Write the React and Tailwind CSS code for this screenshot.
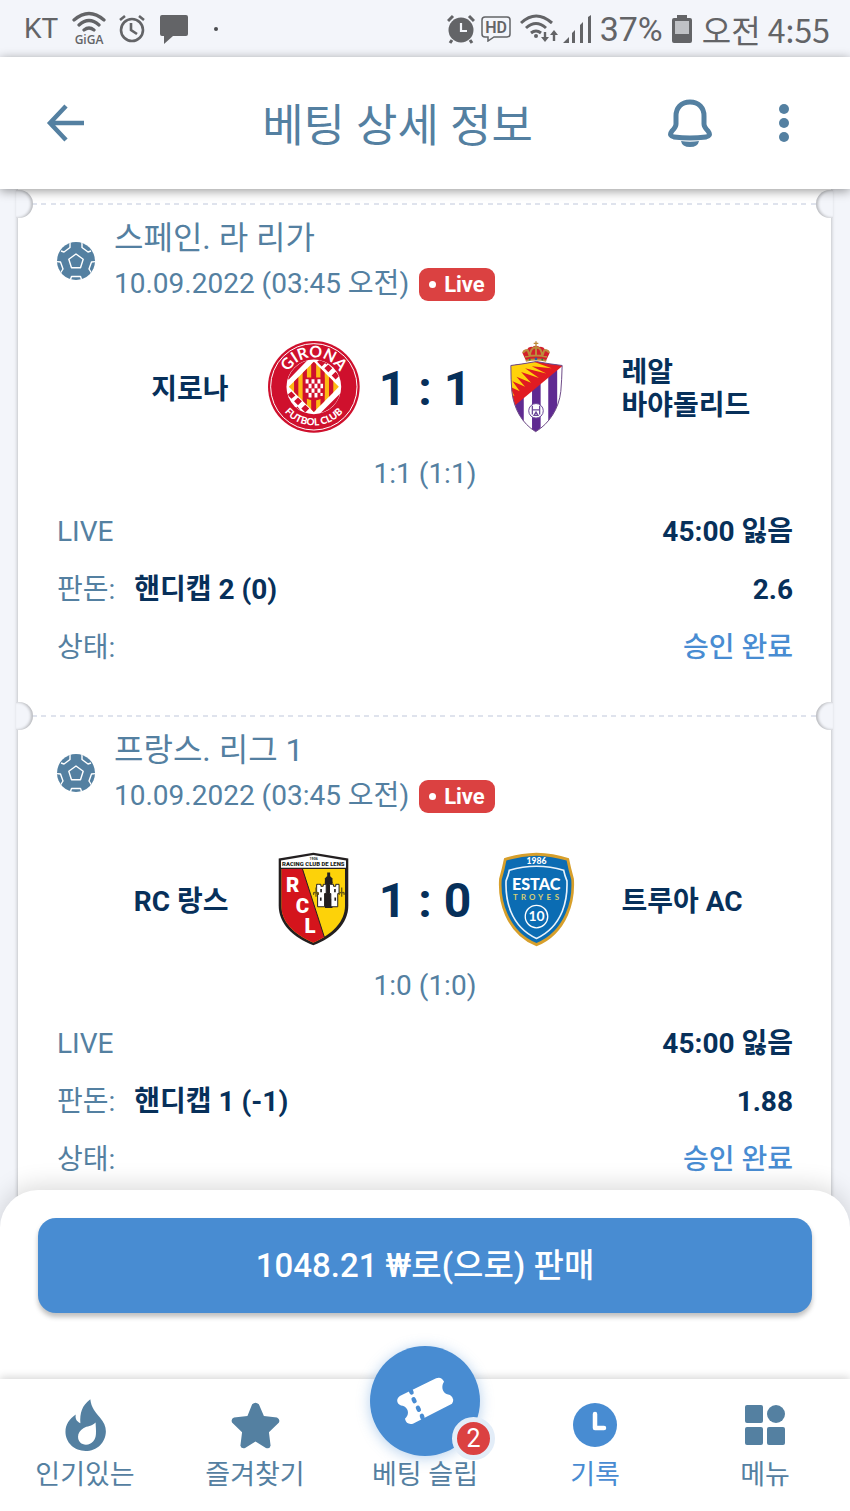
const bets = [
  {
    id: 1,
    league: '스페인. 라 리가',
    date: '10.09.2022 (03:45 오전)',
    home: '지로나',
    away: '레알 바야돌리드',
    HomeCrest: GironaCrest,
    AwayCrest: ValladolidCrest,
    score: '1 : 1',
    halves: '1:1 (1:1)',
    result: '45:00 잃음',
    pick: '핸디캡 2 (0)',
    odds: '2.6',
    status: '승인 완료',
  },
  {
    id: 2,
    league: '프랑스. 리그 1',
    date: '10.09.2022 (03:45 오전)',
    home: 'RC 랑스',
    away: '트루아 AC',
    HomeCrest: LensCrest,
    AwayCrest: TroyesCrest,
    score: '1 : 0',
    halves: '1:0 (1:0)',
    result: '45:00 잃음',
    pick: '핸디캡 1 (-1)',
    odds: '1.88',
    status: '승인 완료',
  },
];

const navItems = [
  { label: '인기있는', Icon: FlameIcon },
  { label: '즐겨찾기', Icon: StarIcon },
  { label: '베팅 슬립', count: 2 },
  { label: '기록', Icon: ClockIcon, active: true },
  { label: '메뉴', Icon: GridIcon },
];

function GironaCrest() {
  return (
    <svg viewBox="21 15 279 279" className="h-[92px] w-[92px]" aria-hidden="true">
      <defs>
        <path id="girona-top" d="M70 154a90 90 0 0 1 180 0" />
        <path id="girona-bottom" d="M43 154a117 117 0 0 0 234 0" />
        <clipPath id="girona-disc">
          <circle cx="160" cy="154" r="82" />
        </clipPath>
        <clipPath id="girona-diamond">
          <path d="M160 78l76 76-76 76-76-76z" />
        </clipPath>
      </defs>
      <circle cx="160" cy="154" r="139" fill="#cf102d" />
      <circle cx="160" cy="154" r="131" fill="none" stroke="#fff" strokeWidth="3" />
      <circle cx="160" cy="154" r="83" fill="#fff" />
      <g clipPath="url(#girona-disc)">
        <path d="M84 132l58-60-40 0-32 52zM178 236l62-62 6 30-42 40z" fill="#cf102d" />
        <path d="M170 78l14-12 12 14-12 12zM192 98l12-12 12 12-12 12zM214 120l12-12 12 12-12 12zM186 74l12-8 10 12-10 8z" fill="#cf102d" />
        <path d="M80 178l12-10 12 12-12 10zM100 198l12-12 12 12-12 12zM122 220l12-12 12 12-12 12zM98 224l12-10 10 12-10 8z" fill="#cf102d" />
      </g>
      <g clipPath="url(#girona-diamond)">
        <path d="M80 70h160v170H80z" fill="#fdb913" />
        <path d="M100 70h13v170h-13zM126 70h13v170h-13zM152 70h15v170h-15zM180 70h13v170h-13zM206 70h13v170h-13z" fill="#cf102d" />
      </g>
      <path d="M130 126h62v52q0 14-31 18-31-4-31-18z" fill="#cf102d" />
      <path
        d="M135 131h9v13h-9zM153 131h9v13h-9zM171 131h9v13h-9zM144 145h9v13h-9zM162 145h9v13h-9zM180 145h8v13h-8zM135 159h9v13h-9zM153 159h9v13h-9zM171 159h9v13h-9zM144 173h9v13h-9zM162 173h9v13h-9zM180 173h7v9h-7z"
        fill="#fff"
      />
      <text fill="#fff" fontFamily="Lato, sans-serif" fontSize="48" fontWeight="700" textAnchor="middle">
        <textPath href="#girona-top" startOffset="50%">GIRONA</textPath>
      </text>
      <text fill="#fff" fontFamily="Lato, sans-serif" fontSize="30" fontWeight="900" textAnchor="middle">
        <textPath href="#girona-bottom" startOffset="50%">FUTBOL CLUB</textPath>
      </text>
    </svg>
  );
}

function ValladolidCrest() {
  return (
    <svg viewBox="44 18 168 278" className="h-[92px] w-[56px]" aria-hidden="true">
      <defs>
        <clipPath id="valladolid-shield">
          <path d="M49 92q35-4 77-12 42 8 78 12-1 44-4 78c-6 54-36 98-76 122-40-24-66-68-72-122q-3-34-3-78z" />
        </clipPath>
      </defs>
      <g clipPath="url(#valladolid-shield)">
        <path d="M44 78h165v220H44z" fill="#fff" />
        <path d="M62 78h26v220H62zM113 78h26v220h-26zM162 78h27v220h-27z" fill="#5f2a91" />
        <path d="M44 74h165v16L62 212 44 190z" fill="#e11b22" />
        <path
          d="M46 84l70-4 56 20-60-6 44 22-64-16 42 30-54-18 30 32-44-18 26 30-38-16 22 30-30-14 14 28-14-6z"
          fill="#ffd20a"
        />
      </g>
      <path
        d="M49 92q35-4 77-12 42 8 78 12-1 44-4 78c-6 54-36 98-76 122-40-24-66-68-72-122q-3-34-3-78z"
        fill="none"
        stroke="#6d4a86"
        strokeWidth="3"
      />
      <circle cx="125" cy="229" r="22" fill="#fff" stroke="#6d4a99" strokeWidth="3" />
      <path d="M114 214v26M136 214v26M114 226h22M119 243h12l-6-10z" fill="none" stroke="#6d4a99" strokeWidth="4" />
      <path d="M94 76l-10-22q2-10 14-10 4-10 16-8 10-8 22 0 12-2 16 8 12 0 14 10l-10 22q-31-6-62 0z" fill="#d3202c" />
      <path
        d="M94 78q31-8 62 0M92 66q33-8 66 0M86 54q4-10 14-8l6 18M106 64q2-26 19-28 17 2 19 28M144 64l6-18q12-2 14 8M125 36v28"
        fill="none"
        stroke="#bd8c3c"
        strokeWidth="6"
      />
      <path d="M125 19v16M118 25h14" stroke="#bd8c3c" strokeWidth="4" />
      <circle cx="125" cy="72" r="4" fill="#275ea8" />
      <circle cx="106" cy="74" r="3" fill="#2b8044" />
      <circle cx="144" cy="74" r="3" fill="#2b8044" />
    </svg>
  );
}

function LensCrest() {
  return (
    <svg viewBox="26 18 215 285" className="h-[94px] w-[71px]" aria-hidden="true">
      <defs>
        <clipPath id="lens-shield">
          <path d="M36 69h193v112c0 48-38 86-96 112-60-26-97-64-97-112z" />
        </clipPath>
      </defs>
      <path d="M28 38L133 20l106 18v142c0 56-44 96-106 121C71 276 28 236 28 180z" fill="#231f20" />
      <path d="M35 44l98-17 99 17v22H35z" fill="#fff" />
      <g clipPath="url(#lens-shield)">
        <path d="M30 69h210v230H30z" fill="#fdd209" />
        <path d="M30 69h70l68 212-34 22H30z" fill="#d4141c" />
      </g>
      <path d="M100 69l68 212" stroke="#231f20" strokeWidth="3" />
      <text x="134" y="42" textAnchor="middle" fill="#231f20" fontFamily="Roboto, sans-serif" fontSize="11" fontWeight="700">1906</text>
      <text x="133" y="61" textAnchor="middle" fill="#231f20" fontFamily="Roboto, sans-serif" fontSize="18" fontWeight="900">RACING CLUB DE LENS</text>
      <g fill="#fff" fontFamily="Roboto, sans-serif" fontSize="62" fontWeight="900">
        <text x="50" y="140">R</text>
        <text x="80" y="202">C</text>
        <text x="106" y="263">L</text>
      </g>
      <path d="M168 98q11-14 23 0v90h-23z" fill="#231f20" />
      <path d="M148 116h8v6h7v-6h9v28h-5v40h-21v-40h-3v-28zM186 116h8v6h7v-6h10v28h-4v40h-21v-40h-4v-28z" fill="#fff" stroke="#231f20" strokeWidth="3" />
      <path d="M154 130h5v10h-5zM196 130h5v10h-5zM153 156h5v10h-5zM197 156h5v10h-5zM168 108h23v4h-23z" fill="#231f20" />
      <path d="M175 80h9v16h-9zM172 160h15v28h-15z" fill="#231f20" />
      <path
        d="M141 126v28M134 148q-2-10 5-6M148 148q2-10-5-6M219 126v28M212 148q-2-10 5-6M226 148q2-10-5-6"
        fill="none"
        stroke="#6b5b12"
        strokeWidth="4"
      />
    </svg>
  );
}

function TroyesCrest() {
  return (
    <svg viewBox="24 17 232 287" className="h-[95px] w-[77px]" aria-hidden="true">
      <path
        d="M42 36q48-16 98-17 50 1 98 17 6 30 15 62 4 60-18 110-30 68-95 94-65-26-95-94-22-50-18-110 9-32 15-62z"
        fill="#d79f2b"
      />
      <path
        d="M49 43q44-14 91-15 47 1 91 15 5 28 14 57 4 56-17 103-28 64-88 89-60-25-88-89-21-47-17-103 9-29 14-57z"
        fill="#0b6cb3"
      />
      <path
        d="M58 72q40-12 82-12t82 12q3 16 10 32 2 52-14 92-24 58-78 82-54-24-78-82-16-40-14-92 7-16 10-32z"
        fill="none"
        stroke="#e9f3fb"
        strokeWidth="5"
      />
      <g textAnchor="middle" fontFamily="Lato, sans-serif" fontWeight="700">
        <text x="140" y="54" fill="#fff" fontSize="26" fontWeight="900">1986</text>
        <text x="139" y="131" fill="#fff" fontSize="49" fontWeight="900">ESTAC</text>
        <g fill="#d8cf74" fontSize="24">
          <text x="76" y="161">T</text>
          <text x="101" y="161">R</text>
          <text x="127" y="161">O</text>
          <text x="152" y="161">Y</text>
          <text x="177" y="161">E</text>
          <text x="202" y="161">S</text>
        </g>
        <text x="140" y="227" fill="#fff" fontSize="42">10</text>
      </g>
      <circle cx="140" cy="212" r="34" fill="none" stroke="#fff" strokeWidth="4" />
    </svg>
  );
}

function BallIcon() {
  return (
    <svg viewBox="0 0 38 38" className="h-[38px] w-[38px] shrink-0" aria-hidden="true">
      <defs>
        <clipPath id="ball-clip">
          <circle cx="19" cy="19" r="19" />
        </clipPath>
      </defs>
      <circle cx="19" cy="19" r="19" fill="#5480a1" />
      <g clipPath="url(#ball-clip)" fill="none" stroke="#fff" strokeWidth="1.4" strokeLinejoin="round">
        <path d="M19 12l7.200 5.200-2.700 8.500h-9L11.800 17.200z" />
        <path d="M4 9l3 1 6-4.500V1M34 9l-3 1-6-4.500V1" />
        <path d="M-1 19.500l4.500.5L6 27l-2.500 4M39 19.500l-4.500.5L32 27l2.500 4" />
        <path d="M13 39l1.500-4.500h9L25 39" />
      </g>
    </svg>
  );
}

function FlameIcon() {
  return (
    <svg viewBox="32 27 123 157" className="h-[52px] w-[41px]" fill="currentColor" aria-hidden="true">
      <path
        fillRule="evenodd"
        d="M108 28c3 26 15 38 29 55 12 14 18 27 18 41 0 34-27 60-61 60s-61-25-61-58c0-22 12-38 31-52-2 12 2 21 14 26-2-31 5-53 30-72zM124 98c-12 12-25 10-37 17-10 6-16 15-16 26 0 14 10 24 24 24 18 0 29-14 30-32 1-13-1-24-1-35z"
      />
    </svg>
  );
}

function StarIcon() {
  return (
    <svg viewBox="527 32 146 140" className="h-[47px] w-[49px]" fill="currentColor" aria-hidden="true">
      <path d="M590 39q10-10 20 0l15 35 39 4q10 5 6 15l-30 29 5 40q-3 11-14 7l-31-19-31 19q-11 3-14-7l5-40-30-29q-4-11 6-15l40-4z" />
    </svg>
  );
}

function ClockIcon() {
  return (
    <svg viewBox="0 0 44 44" className="h-11 w-11" aria-hidden="true">
      <circle cx="22" cy="22" r="22" fill="currentColor" />
      <path d="M22 11v14h9" fill="none" stroke="#fff" strokeWidth="4.500" strokeLinecap="round" strokeLinejoin="round" />
    </svg>
  );
}

function GridIcon() {
  return (
    <svg viewBox="0 0 40 40" className="h-10 w-10" fill="currentColor" aria-hidden="true">
      <rect width="18" height="18" rx="2" />
      <circle cx="31" cy="9" r="9" />
      <rect y="22" width="18" height="18" rx="2" />
      <rect x="22" y="22" width="18" height="18" rx="2" />
    </svg>
  );
}

function TicketIcon() {
  return (
    <svg viewBox="140 126 173 145" className="h-12 w-[58px]" aria-hidden="true">
      <path
        d="M152 183L260 130q16-6 24 10c-10 14-6 38 18 40q16 10 6 27L190 267q-20 4-24-15c16-14 10-38-12-40-16-6-14-22-2-29z"
        fill="#fff"
      />
      <path d="M184 168l2 5M192 193l3 6M205 219l3 6M217 243l2 6" stroke="#488cd2" strokeWidth="13" strokeLinecap="round" />
    </svg>
  );
}

function StatusBar() {
  return (
    <div className="flex h-[57px] shrink-0 items-center justify-between bg-[#f3f5fa] pl-6 pr-5 text-[#636467]">
      <div className="flex items-center">
        <span className="w-[46px] text-[28px] leading-none">KT</span>
        <svg viewBox="0 0 38 40" className="h-10 w-[38px]" aria-label="GiGA WiFi">
          <g fill="none" stroke="currentColor" strokeWidth="3.200" strokeLinecap="round">
            <path d="M4 11q15-13 30 0M9 16q10-9 20 0M14 21q5-4 10 0" />
          </g>
          <text x="19" y="35" textAnchor="middle" fill="currentColor" fontFamily="Open Sans, sans-serif" fontSize="12" fontWeight="600">GiGA</text>
        </svg>
        <svg viewBox="0 0 28 30" className="ml-[10px] h-[30px] w-7" fill="none" stroke="currentColor" strokeWidth="2.600" aria-hidden="true">
          <circle cx="14" cy="16" r="11" />
          <path d="M13 9v7l6 4M2 6l5-4M26 6l-5-4" />
        </svg>
        <svg viewBox="0 0 28 30" className="ml-[14px] h-[30px] w-7" fill="currentColor" aria-hidden="true">
          <path d="M2 1h24q2 0 2 2v17q0 2-2 2H13l-9 8v-8H2q-2 0-2-2V3q0-2 2-2z" />
        </svg>
        <span className="ml-[26px] h-1 w-1 rounded-full bg-[#4b4c4f]" />
      </div>
      <div className="flex items-center">
        <svg viewBox="0 0 28 30" className="h-[30px] w-7" aria-hidden="true">
          <circle cx="14" cy="16" r="12.500" fill="currentColor" />
          <path d="M1 7l5-5M27 7l-5-5M5 26l-2 3M23 26l2 3" stroke="currentColor" strokeWidth="3" />
          <path d="M14 9v8h6" fill="none" stroke="#f3f5fa" strokeWidth="2.200" />
        </svg>
        <svg viewBox="0 0 30 26" className="ml-[6px] h-[26px] w-[30px]" aria-hidden="true">
          <path d="M4 1h22q3 0 3 3v14q0 3-3 3H13l-6 4v-4H4q-3 0-3-3V4q0-3 3-3z" fill="none" stroke="currentColor" strokeWidth="1.500" />
          <text x="15" y="17" textAnchor="middle" fill="currentColor" fontFamily="Roboto, sans-serif" fontSize="16" fontWeight="600">HD</text>
        </svg>
        <svg viewBox="0 0 38 30" className="ml-[9px] h-[30px] w-[38px]" aria-hidden="true">
          <path d="M1 9q15-14 31 0M6 14q10-9 20 0M11 19q5-4 10 0" fill="none" stroke="currentColor" strokeWidth="3" />
          <circle cx="16" cy="22" r="2" fill="currentColor" />
          <path d="M25 18v7M34 27v-7" stroke="currentColor" strokeWidth="2.400" />
          <path d="M21 23h8l-4 5zM30 21h8l-4-5z" fill="currentColor" />
        </svg>
        <svg viewBox="0 0 28 28" className="ml-[5px] h-7 w-7" fill="currentColor" aria-hidden="true">
          <path d="M0 28l6-6v6zM9 18l3-3v13H9zM17 10l3-3v21h-3zM25 2l3-2v28h-3z" />
        </svg>
        <span className="ml-[9px] text-[34px] leading-none">37%</span>
        <svg viewBox="0 0 20 28" className="ml-[9px] h-7 w-5" aria-hidden="true">
          <path d="M5 0h10v3h3q2 0 2 2v21q0 2-2 2H2q-2 0-2-2V5q0-2 2-2h3z" fill="currentColor" />
          <path d="M3 6h14v13H3z" fill="#bfc1c5" />
        </svg>
        <span className="ml-[10px] font-['Noto_Sans_CJK_KR',sans-serif] text-[32px] leading-none">오전 4:55</span>
      </div>
    </div>
  );
}

function Header() {
  return (
    <header className="relative z-10 flex h-[132px] shrink-0 items-center bg-white pl-[46px] pr-[60px] text-[#5480a1] shadow-[0_2px_10px_rgba(0,0,0,0.4)]">
      <button type="button" aria-label="뒤로">
        <svg viewBox="0 0 38 38" className="h-[38px] w-[38px]" fill="none" stroke="currentColor" strokeWidth="4.500" aria-hidden="true">
          <path d="M38 19H4M20 2L4 19l16 17" />
        </svg>
      </button>
      <h1 className="flex-1 pl-11 pt-2 text-center text-[45px] leading-[60px]">베팅 상세 정보</h1>
      <button type="button" aria-label="알림">
        <svg viewBox="0 0 46 48" className="h-12 w-[46px]" aria-hidden="true">
          <path
            d="M23 3c9 0 14 6 14 14v8c0 3 2 5 4 7 3 4 1 5-2 6-11 1.500-21 1.500-32 0-3-1-5-2-2-6 2-2 4-4 4-7v-8c0-8 5-14 14-14z"
            fill="none"
            stroke="currentColor"
            strokeWidth="5"
          />
          <path d="M14 42q9 1.500 18 0-1 6-9 6t-9-6z" fill="currentColor" />
        </svg>
      </button>
      <button type="button" aria-label="더보기" className="ml-[65px]">
        <svg viewBox="0 0 12 40" className="h-10 w-3" fill="currentColor" aria-hidden="true">
          <circle cx="6" cy="6" r="5" />
          <circle cx="6" cy="20" r="5" />
          <circle cx="6" cy="34" r="5" />
        </svg>
      </button>
    </header>
  );
}

function BetCard({ bet }) {
  const { HomeCrest, AwayCrest } = bet;

  return (
    <article className="relative pb-[38px]">
      {/* Tear line with a notch on each side */}
      <div className="mx-[14px] h-[2px] bg-[repeating-linear-gradient(90deg,#dfe3ed_0_5px,transparent_5px_9px,#dfe3ed_9px_14px,transparent_14px_19px)]" />
      <span className="absolute -left-[2px] -top-[13px] h-[28px] w-[17px] rounded-r-full bg-[#f3f5fa] shadow-[inset_-2px_0_3px_rgba(0,0,0,0.24)]" />
      <span className="absolute -right-[2px] -top-[13px] h-[28px] w-[17px] rounded-l-full bg-[#f3f5fa] shadow-[inset_2px_0_3px_rgba(0,0,0,0.24)]" />

      <div className="flex items-center gap-[19px] pl-[39px] pr-[38px] pt-[10px]">
        <BallIcon />
        <div className="text-[#5480a1]">
          <h2 className="text-[32px] leading-[46px]">{bet.league}</h2>
          <div className="flex h-[46px] items-center gap-[10px]">
            <span className="text-[28px]">{bet.date}</span>
            <span className="flex h-[33px] items-center gap-2 rounded-[9px] bg-[#db4141] px-[10px] text-[22px] font-bold text-white">
              <span className="h-[7px] w-[7px] rounded-full bg-white" />
              Live
            </span>
          </div>
        </div>
      </div>

      <div className="mt-[30px] grid min-h-[100px] grid-cols-[1fr_92px_131px_92px_1fr] items-center break-keep pl-[39px] pr-[38px] text-[28px] font-bold leading-[33px] text-[#07305a]">
        <span className="pr-[39px] pt-1 text-right">{bet.home}</span>
        <span className="flex justify-center"><HomeCrest /></span>
        <span className="pt-1 text-center text-[48px] leading-none">{bet.score}</span>
        <span className="flex justify-center"><AwayCrest /></span>
        <span className="pl-[39px] pt-1">{bet.away}</span>
      </div>
      <p className="mt-[18px] pl-[39px] pr-[38px] text-center text-[28px] leading-[38px] text-[#5480a1]">{bet.halves}</p>

      <dl className="mt-[10px] pl-[39px] pr-[38px] text-[28px] leading-[58px] text-[#5480a1]">
        <div className="flex h-[58px] justify-between">
          <dt>LIVE</dt>
          <dd className="font-bold text-[#07305a]">{bet.result}</dd>
        </div>
        <div className="flex h-[58px] justify-between">
          <dt>
            판돈: <span className="ml-3 font-bold text-[#07305a]">{bet.pick}</span>
          </dt>
          <dd className="font-bold text-[#07305a]">{bet.odds}</dd>
        </div>
        <div className="flex h-[58px] justify-between">
          <dt>상태:</dt>
          <dd className="font-medium text-[#488cd2]">{bet.status}</dd>
        </div>
      </dl>
    </article>
  );
}

function NavItem({ item }) {
  const { Icon } = item;

  return (
    <a
      href="#"
      className={`relative flex flex-1 flex-col items-center pt-[22px] ${item.active ? 'text-[#488cd2]' : 'text-[#5480a1]'}`}
    >
      <span className="flex h-12 items-center justify-center">
        {Icon ? (
          <Icon />
        ) : (
          <span className="absolute left-1/2 -top-[33px] flex h-[110px] w-[110px] -translate-x-1/2 items-center justify-center rounded-full bg-[#488cd2] shadow-[0_2px_14px_rgba(72,140,210,0.4)]">
            <TicketIcon />
            <span className="absolute -bottom-[4px] -right-[15px] flex h-[43px] w-[43px] items-center justify-center rounded-full border-[5px] border-[#e3edf8] bg-[#db4141] text-[25px] leading-none text-white">
              {item.count}
            </span>
          </span>
        )}
      </span>
      <span className="mt-[6px] whitespace-nowrap text-[27px] leading-[40px]">{item.label}</span>
    </a>
  );
}

export default function App() {
  return (
    <div className="flex h-screen flex-col overflow-hidden bg-[#f3f5fa] font-[Roboto,'Noto_Sans_CJK_KR',sans-serif]">
      <StatusBar />
      <Header />

      <main className="min-h-0 flex-1 overflow-hidden pl-[18px] pr-[19px]">
        <div className="bg-white pt-[14px] shadow-[0_0_4px_rgba(0,0,0,0.3)]">
          {bets.map((bet) => (
            <BetCard key={bet.id} bet={bet} />
          ))}
        </div>
      </main>

      <footer className="relative z-10 -mt-10 shrink-0 rounded-t-[38px] bg-white shadow-[0_-4px_24px_rgba(0,0,0,0.15)]">
        <div className="px-[38px] pb-[66px] pt-7">
          <button
            type="button"
            className="h-[95px] w-full rounded-[18px] bg-[#488cd2] text-[33px] font-medium text-white shadow-[0_4px_5px_rgba(0,0,0,0.25)]"
          >
            1048.21 ₩로(으로) 판매
          </button>
        </div>
        <nav className="flex h-[132px] bg-white shadow-[0_-2px_8px_rgba(0,0,0,0.16)]">
          {navItems.map((item) => (
            <NavItem key={item.label} item={item} />
          ))}
        </nav>
      </footer>
    </div>
  );
}
